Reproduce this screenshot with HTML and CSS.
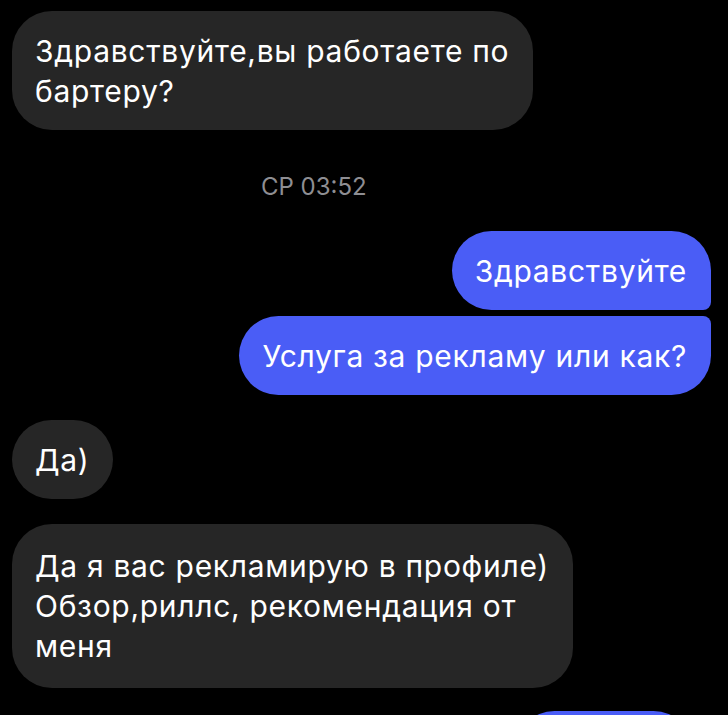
FILE: index.html
```html
<!DOCTYPE html>
<html lang="ru">
<head>
  <meta charset="UTF-8" />
  <title>Чат</title>
  <meta name="viewport" content="width=device-width, initial-scale=1.0" />
  <link rel="stylesheet" href="styles.css">
</head>
<body>

  <div class="chat">
    <div class="msg in">Здравствуйте,вы работаете по<br>бартеру?</div>

    <div class="time">СР 03:52</div>

    <div class="msg out top">Здравствуйте</div>
    <div class="msg out bottom">Услуга за рекламу или как?</div>

    <div class="msg in gap">Да)</div>
    <div class="msg in gap long">Да я вас рекламирую в профиле)<br>Обзор,риллс, рекомендация от<br>меня</div>

    <div class="msg out gap tail">&nbsp;</div>
  </div>

</body>
</html>
```

FILE: styles.css
```css
/* RESET */
* {
  margin: 0;
  padding: 0;
  box-sizing: border-box;
}

html, body {
  height: 100%;
  background: #000;
  color: #fff;
  font-family: 'Inter', 'Noto Sans', sans-serif;
  overflow: hidden;
}

.chat {
  display: flex;
  flex-direction: column;
  padding: 11px 17px 0 12px;
}

.msg {
  width: fit-content;
  max-width: 600px;
  font-size: 30px;
  line-height: 40px;
  letter-spacing: 0.7px;
  padding: 20px 24px 19px 23px;
  border-radius: 40px;
  white-space: nowrap;
}

.msg.in {
  align-self: flex-start;
  background: #262626;
}

.msg.out {
  align-self: flex-end;
  background: #4a5df6;
}

.msg.gap {
  margin-top: 25px;
}

.msg.long {
  padding-top: 22px;
  padding-bottom: 22px;
}

/* grouped outgoing bubbles */
.msg.out.top {
  border-bottom-right-radius: 8px;
}

.msg.out.bottom {
  margin-top: 6px;
  border-top-right-radius: 8px;
}

.time {
  align-self: flex-start;
  margin: 44px 0 31px 249px;
  font-size: 24px;
  line-height: 26px;
  color: #8e8e93;
}

.msg.tail {
  width: 178px;
  margin-right: 18px;
  margin-top: 23px;
}
```
